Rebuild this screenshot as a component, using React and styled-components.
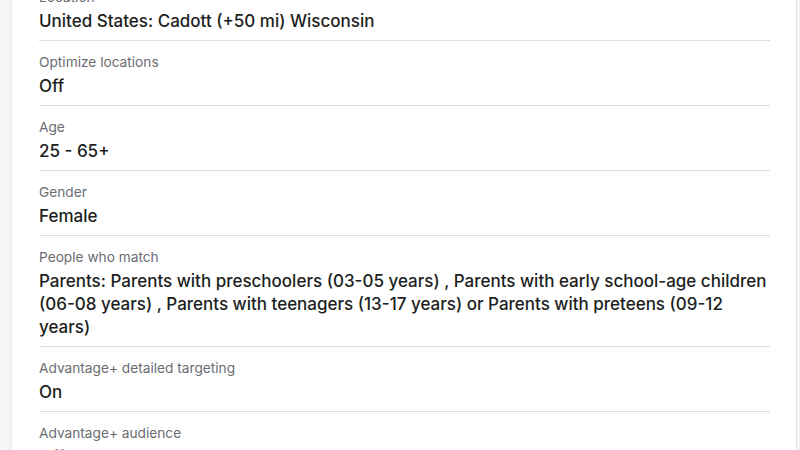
import React from 'react';
import styled, { createGlobalStyle } from 'styled-components';

const GlobalStyle = createGlobalStyle`
	html, body {
		margin: 0;
		padding: 0;
		height: 100%;
		overflow: hidden;
		background: #f5f6f7;
		font-family: Inter, "Noto Sans", sans-serif;
	}
`;

const rows = [
	{ label: 'Location', value: 'United States: Cadott (+50 mi) Wisconsin' },
	{ label: 'Optimize locations', value: 'Off' },
	{ label: 'Age', value: '25 - 65+' },
	{ label: 'Gender', value: 'Female' },
	{
		label: 'People who match',
		value:
			'Parents: Parents with preschoolers (03-05 years) , Parents with early school-age children (06-08 years) , Parents with teenagers (13-17 years) or Parents with preteens (09-12 years)',
	},
	{ label: 'Advantage+ detailed targeting', value: 'On' },
	{ label: 'Advantage+ audience', value: 'Off' },
];

const App = () => {
	return (
		<Page>
			<GlobalStyle />
			<Panel>
				<List>
					{rows.map((row) => (
						<Row key={row.label}>
							<Label>{row.label}</Label>
							<Value>{row.value}</Value>
						</Row>
					))}
				</List>
			</Panel>
		</Page>
	);
};

export default App;

const Page = styled.div`
	height: 450px;
	padding: 0 3px 0 11px;
	box-sizing: border-box;
	display: flex;
`;

const Panel = styled.div`
	flex: 1;
	background: #ffffff;
	border-left: 1px solid #e9eaec;
	border-right: 1px solid #e4e6e9;
	padding: 0 26px 0 27px;
	overflow: hidden;
`;

const List = styled.div`
	display: flex;
	flex-direction: column;
	margin-top: -24px;
`;

const Row = styled.div`
	display: flex;
	flex-direction: column;
	gap: 4px;
	padding: 12px 0 7px;
	border-bottom: 1px solid #dcdee2;
`;

const Label = styled.div`
	font-size: 13.7px;
	line-height: 18px;
	color: #686c72;
`;

const Value = styled.div`
	font-size: 17px;
	line-height: 23px;
	color: #1c1e21;
	font-weight: 500;
`;
